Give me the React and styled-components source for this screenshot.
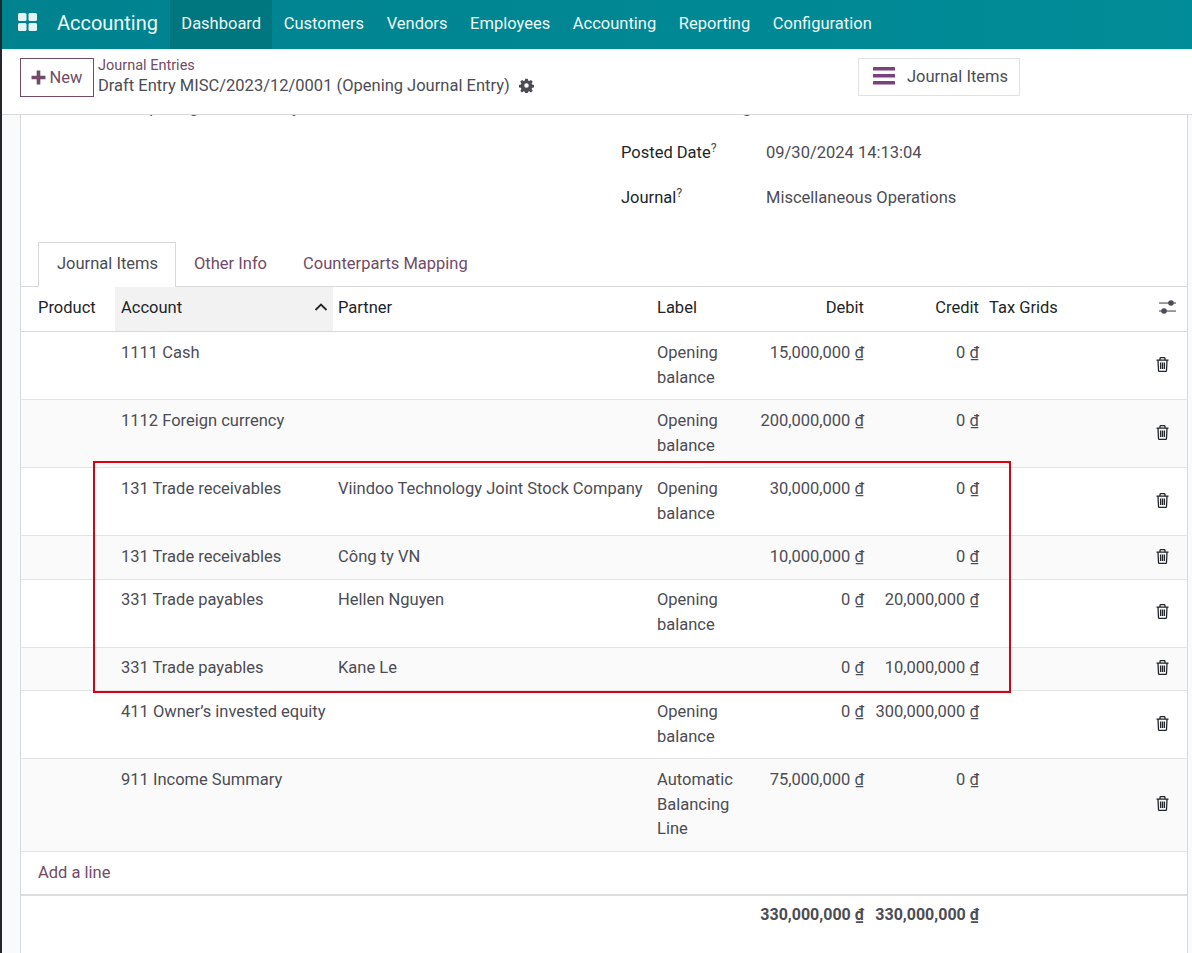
import styled, { createGlobalStyle } from "styled-components";

const GlobalStyle = createGlobalStyle`
  html, body {
    margin: 0;
    padding: 0;
    height: 100%;
    overflow: hidden;
  }
  *, *::before, *::after {
    box-sizing: border-box;
  }
  body {
    font-family: Roboto, "Noto Sans", sans-serif;
    font-size: 16.5px;
    color: #4c4c55;
    background: #f9fafb;
  }
`;

const Page = styled.div`
  height: 953px;
  display: flex;
  flex-direction: column;
  border-left: 2px solid #24262b;
  overflow: hidden;
`;

const Navbar = styled.nav`
  height: 50px;
  flex: none;
  display: flex;
  align-items: stretch;
  background: linear-gradient(90deg, #00828f, #008c98);
  border-bottom: 1px solid #e3f6f8;
  color: #fff;
`;

const AppsButton = styled.div`
  width: 48px;
  display: flex;
  align-items: center;
  padding-left: 16px;
  margin-top: -4px;
`;

const Brand = styled.div`
  width: 120px;
  font-size: 20px;
  padding-left: 7px;
  line-height: 47px;
  letter-spacing: -0.02px;
  color: #eafafa;
`;

const NavItem = styled.div`
  padding: 0 11.3px;
  line-height: 47px;
  color: #ecf8f8;
  background: ${(p) => (p.$active ? "#00767f" : "transparent")};
`;

const ControlPanel = styled.header`
  height: 65px;
  flex: none;
  display: flex;
  align-items: flex-start;
  background: #fff;
  border-bottom: 1px solid #d9d9dc;
  padding: 8px 0 0 18px;
  position: relative;
  z-index: 2;
`;

const NewButton = styled.button`
  width: 74px;
  height: 39px;
  border: 1px solid #714b67;
  background: #fff;
  color: #714b67;
  font: inherit;
  display: flex;
  align-items: center;
  justify-content: center;
  gap: 4px;
  padding: 0 1px 0 0;
`;

const Breadcrumb = styled.div`
  width: 760px;
  margin-left: 4px;
  line-height: 19px;
`;

const Crumb = styled.div`
  font-size: 14.5px;
  color: #714b67;
  line-height: 16px;
`;

const Current = styled.div`
  display: flex;
  align-items: center;
  gap: 9px;
  line-height: 22px;
  margin-top: 1px;

  svg {
    margin-bottom: 2px;
  }
`;

const SwitchButton = styled.div`
  width: 162px;
  height: 38px;
  border: 1px solid #dee2e6;
  display: flex;
  align-items: center;
  gap: 12px;
  padding: 0 0 2px 14px;
`;

const Scroll = styled.main`
  flex: 1;
  min-height: 0;
  overflow: hidden;
  padding-left: 18px;
  padding-right: 4px;
`;

const Sheet = styled.div`
  position: relative;
  background: #fff;
  border-left: 1px solid #d9d9dc;
  border-right: 1px solid #d9d9dc;
  height: 838px;
  overflow: hidden;
`;

const ClippedLine = styled.div`
  height: 15px;
  display: flex;
  margin-top: -18px;
  margin-bottom: 18px;
`;

const ClippedText = styled.span`
  line-height: 22px;
  white-space: nowrap;
  margin-left: ${(p) => p.$left}px;
`;

const FieldRow = styled.div`
  display: flex;
  height: 45px;
  padding-left: 600px;
  align-items: center;
`;

const FieldLabel = styled.div`
  width: 145px;
  color: #212529;
  sup {
    font-size: 12.5px;
    line-height: 0;
    color: #4c4c55;
  }
`;

const FieldValue = styled.div``;

const Tabs = styled.div`
  display: flex;
  align-items: flex-end;
  height: 45px;
  margin-top: 22px;
  padding-left: 17px;
  border-bottom: 1px solid #d9d9dc;
`;

const Tab = styled.div`
  height: ${(p) => (p.$active ? "45px" : "44px")};
  line-height: 41px;
  padding: 0 17px 0 ${(p) => (p.$active ? "18px" : "17px")};
  color: ${(p) => (p.$active ? "#4c4c55" : "#714b67")};
  background: #fff;
  border: 1px solid ${(p) => (p.$active ? "#d9d9dc" : "transparent")};
  border-bottom: 0;
  margin-bottom: ${(p) => (p.$active ? "-1px" : "0")};
`;

const columns = "94px 218px 319px 93px 124px 115px 100px 1fr";

const HeadRow = styled.div`
  display: grid;
  grid-template-columns: ${columns};
  height: 45px;
  border-bottom: 1px solid #d9d9dc;
  color: #212529;
`;

const HeadCell = styled.div`
  display: flex;
  align-items: center;
  justify-content: ${(p) => (p.$right ? "flex-end" : "space-between")};
  padding: 0 5px 4px ${(p) => p.$left || 5}px;
  white-space: nowrap;
  background: ${(p) => (p.$sorted ? "#f2f2f2" : "transparent")};
`;

const Row = styled.div`
  display: grid;
  grid-template-columns: ${columns};
  height: ${(p) => p.$h}px;
  padding-top: ${(p) => p.$top}px;
  border-bottom: 1px solid #e3e3e5;
  background: ${(p) => (p.$odd ? "#fafafa" : "#fff")};
  line-height: 24.5px;
`;

const Cell = styled.div`
  padding: 0 5px 0 ${(p) => p.$left || 5}px;
  text-align: ${(p) => (p.$right ? "right" : "left")};
  white-space: ${(p) => (p.$wrap ? "normal" : "nowrap")};
`;

const ActionCell = styled.div`
  display: flex;
  align-items: center;
  justify-content: flex-end;
  padding: 0 ${(p) => p.$right}px ${(p) => p.$bottom}px 0;
`;

const Currency = styled.span`
  text-decoration: underline;
`;

const AddRow = styled.div`
  height: 44px;
  line-height: 41px;
  padding-left: 17px;
  color: #714b67;
  border-bottom: 2px solid #dedee0;
`;

const FooterRow = styled.div`
  display: grid;
  grid-template-columns: ${columns};
  padding-top: 9px;
  font-size: 16px;
  font-weight: 700;
  line-height: 20px;
`;

const Highlight = styled.div`
  position: absolute;
  left: 72px;
  top: 346px;
  width: 918px;
  height: 232px;
  border: 2px solid #dc0010;
  pointer-events: none;
`;

const AppsIcon = () => (
  <svg width="19" height="19" viewBox="0 0 19 19" fill="#e4f4f4">
    <rect x="0" y="0" width="8.5" height="8" rx="1.5" />
    <rect x="10.5" y="0" width="8.5" height="8" rx="1.5" />
    <rect x="0" y="10" width="8.5" height="8" rx="1.5" />
    <rect x="10.5" y="10" width="8.5" height="8" rx="1.5" />
  </svg>
);

const PlusIcon = () => (
  <svg width="15" height="15" viewBox="0 0 14 14" fill="#714b67">
    <path d="M5.3 0.5h3.4v4.8h4.8v3.4H8.7v4.8H5.3V8.7H0.5V5.3h4.8z" />
  </svg>
);

const GearIcon = () => (
  <svg width="15" height="15" viewBox="0 0 24 24" fill="#4c4c55">
    <path
      fillRule="evenodd"
      d="M10 1h4l.6 3.1 1.9.8 2.7-1.8 2.8 2.8-1.8 2.7.8 1.9 3 .5v4l-3 .6-.8 1.9 1.8 2.7-2.8 2.8-2.7-1.8-1.9.8-.6 3h-4l-.6-3-1.9-.8-2.7 1.8-2.8-2.8 1.8-2.7-.8-1.9-3-.6v-4l3-.5.8-1.9L2 5.9l2.8-2.8 2.7 1.8 1.9-.8zM12 8.4a3.6 3.6 0 1 0 0 7.2 3.6 3.6 0 0 0 0-7.2z"
    />
  </svg>
);

const MenuIcon = () => (
  <svg width="22" height="18" viewBox="0 0 22 18" fill="#7c3f80">
    <rect x="0" y="0" width="22" height="3.6" rx="0.6" />
    <rect x="0" y="7" width="22" height="3.6" rx="0.6" />
    <rect x="0" y="14" width="22" height="3.6" rx="0.6" />
  </svg>
);

const SortIcon = () => (
  <svg width="14" height="8" viewBox="0 0 14 8" fill="none" stroke="#212529" strokeWidth="1.8">
    <path d="M1.5 7 7 1.5 12.5 7" />
  </svg>
);

const SlidersIcon = () => (
  <svg width="17" height="14" viewBox="0 0 17 14" fill="#4c4c55">
    <rect x="0" y="2.5" width="17" height="1.1" />
    <rect x="0" y="10.5" width="17" height="1.1" />
    <circle cx="12" cy="3" r="2.8" />
    <circle cx="5" cy="11" r="2.8" />
  </svg>
);

const TrashIcon = () => (
  <svg width="13" height="15" viewBox="0 0 13 15" fill="none" stroke="#22262a" strokeWidth="1.3">
    <path d="M0.5 3.2h12M2 3.2l.5 10.2c0 .6.4 1 1 1h6c.6 0 1-.4 1-1L11 3.2M4 3V1.6c0-.6.4-1 1-1h3c.6 0 1 .4 1 1V3" />
    <path d="M4.6 5.5v6.6M6.5 5.5v6.6M8.4 5.5v6.6" />
  </svg>
);

const Money = ({ value }) => (
  <>
    {value} <Currency>₫</Currency>
  </>
);

const lines = [
  { h: 68, top: 9, account: "1111 Cash", label: "Opening balance", debit: "15,000,000", credit: "0" },
  { h: 68, top: 9, account: "1112 Foreign currency", label: "Opening balance", debit: "200,000,000", credit: "0" },
  { h: 68, top: 9, account: "131 Trade receivables", partner: "Viindoo Technology Joint Stock Company", label: "Opening balance", debit: "30,000,000", credit: "0" },
  { h: 44, top: 9, account: "131 Trade receivables", partner: "Công ty VN", debit: "10,000,000", credit: "0" },
  { h: 68, top: 8, account: "331 Trade payables", partner: "Hellen Nguyen", label: "Opening balance", debit: "0", credit: "20,000,000" },
  { h: 43, top: 8, account: "331 Trade payables", partner: "Kane Le", debit: "0", credit: "10,000,000" },
  { h: 68, top: 9, account: "411 Owner’s invested equity", label: "Opening balance", debit: "0", credit: "300,000,000" },
  { h: 93, top: 9, account: "911 Income Summary", label: "Automatic Balancing Line", debit: "75,000,000", credit: "0" },
];

const navItems = ["Customers", "Vendors", "Employees", "Accounting", "Reporting", "Configuration"];

export default function App() {
  return (
    <>
      <GlobalStyle />
      <Page>
        <Navbar>
          <AppsButton>
            <AppsIcon />
          </AppsButton>
          <Brand>Accounting</Brand>
          <NavItem $active>Dashboard</NavItem>
          {navItems.map((item) => (
            <NavItem key={item}>{item}</NavItem>
          ))}
        </Navbar>
        <ControlPanel>
          <NewButton>
            <PlusIcon />
            New
          </NewButton>
          <Breadcrumb>
            <Crumb>Journal Entries</Crumb>
            <Current>
              Draft Entry MISC/2023/12/0001 (Opening Journal Entry)
              <GearIcon />
            </Current>
          </Breadcrumb>
          <SwitchButton>
            <MenuIcon />
            Journal Items
          </SwitchButton>
        </ControlPanel>
        <Scroll>
          <Sheet>
            <ClippedLine>
              <ClippedText $left={117}>Opening Journal Entry</ClippedText>
              <ClippedText $left={396}>Posting</ClippedText>
            </ClippedLine>
            <FieldRow>
              <FieldLabel>
                Posted Date<sup>?</sup>
              </FieldLabel>
              <FieldValue>09/30/2024 14:13:04</FieldValue>
            </FieldRow>
            <FieldRow>
              <FieldLabel>
                Journal<sup>?</sup>
              </FieldLabel>
              <FieldValue>Miscellaneous Operations</FieldValue>
            </FieldRow>
            <Tabs>
              <Tab $active>Journal Items</Tab>
              <Tab>Other Info</Tab>
              <Tab>Counterparts Mapping</Tab>
            </Tabs>
            <HeadRow>
              <HeadCell $left={17}>Product</HeadCell>
              <HeadCell $sorted $left={6}>
                Account
                <SortIcon />
              </HeadCell>
              <HeadCell>Partner</HeadCell>
              <HeadCell>Label</HeadCell>
              <HeadCell $right>Debit</HeadCell>
              <HeadCell $right>Credit</HeadCell>
              <HeadCell>Tax Grids</HeadCell>
              <ActionCell $right={11} $bottom={4}>
                <SlidersIcon />
              </ActionCell>
            </HeadRow>
            {lines.map((line, i) => (
              <Row key={i} $h={line.h} $top={line.top} $odd={i % 2 === 1}>
                <Cell />
                <Cell $left={6}>{line.account}</Cell>
                <Cell>{line.partner}</Cell>
                <Cell $wrap>{line.label}</Cell>
                <Cell $right>
                  <Money value={line.debit} />
                </Cell>
                <Cell $right>
                  <Money value={line.credit} />
                </Cell>
                <Cell />
                <ActionCell $right={18} $bottom={12}>
                  <TrashIcon />
                </ActionCell>
              </Row>
            ))}
            <AddRow>Add a line</AddRow>
            <FooterRow>
              <Cell />
              <Cell />
              <Cell />
              <Cell />
              <Cell $right>
                <Money value="330,000,000" />
              </Cell>
              <Cell $right>
                <Money value="330,000,000" />
              </Cell>
            </FooterRow>
            <Highlight />
          </Sheet>
        </Scroll>
      </Page>
    </>
  );
}
